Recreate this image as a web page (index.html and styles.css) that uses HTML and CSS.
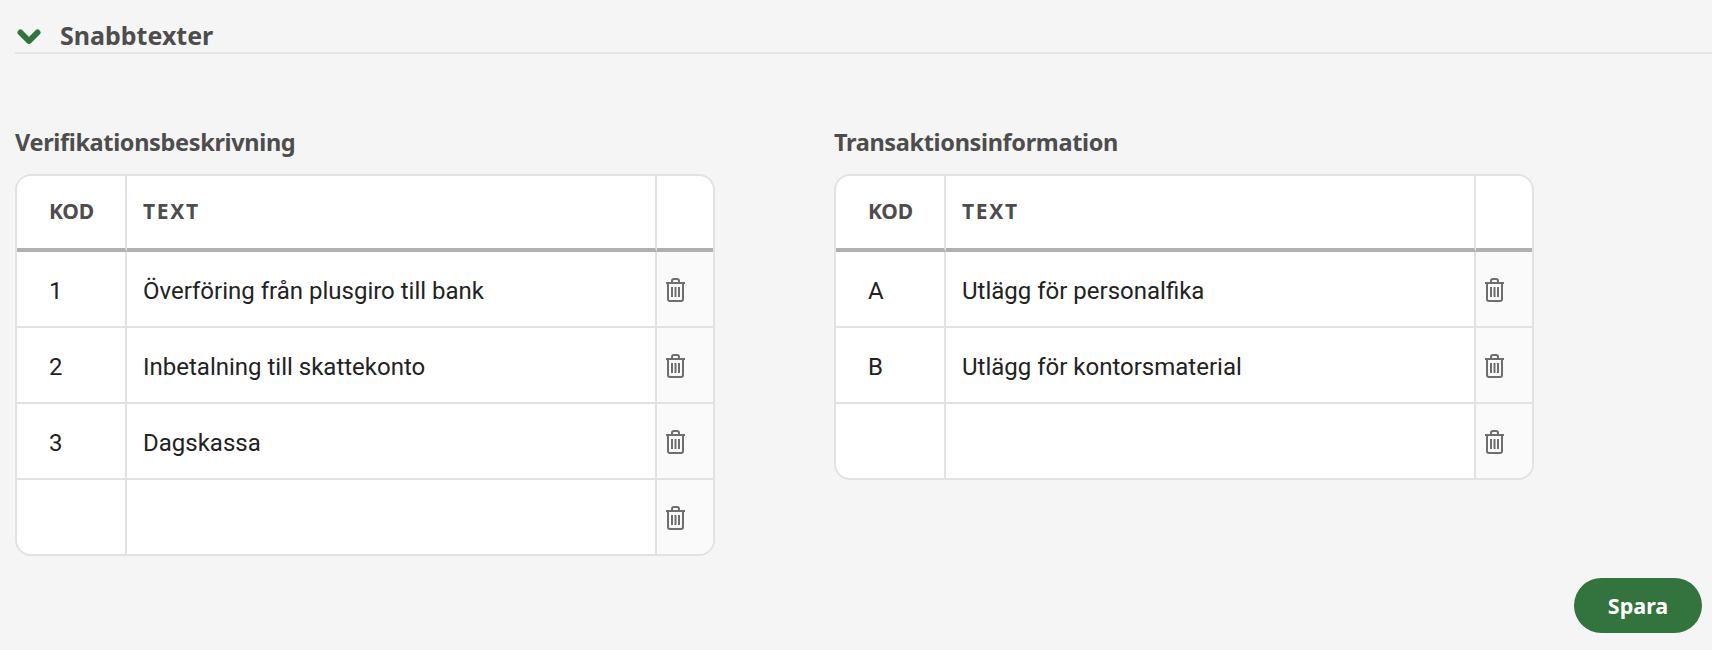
FILE: index.html
```html
<!DOCTYPE html>
<html lang="sv">
<head>
<meta charset="utf-8">
<title>Snabbtexter</title>
<link rel="stylesheet" href="styles.css">
</head>
<body>
<svg class="defs" width="0" height="0" aria-hidden="true">
  <symbol id="trash" viewBox="0 0 21 24">
    <path d="M1 5h19M3 5v16a2 2 0 0 0 2 2h11a2 2 0 0 0 2-2V5M7 5V3a2 2 0 0 1 2-2h3a2 2 0 0 1 2 2v2" fill="none" stroke="currentColor" stroke-width="2"/>
    <path d="M7 9v10M10.500 9v10M14 9v10" fill="none" stroke="currentColor" stroke-width="2"/>
  </symbol>
</svg>
<section class="section">
  <header class="section-head">
    <svg class="chevron" viewBox="0 0 24 16" aria-hidden="true"><path d="M3.500 3.500 12 12l8.500-8.500" fill="none" stroke="#33733d" stroke-width="6" stroke-linejoin="round" stroke-linecap="round"/></svg>
    <h2>Snabbtexter</h2>
  </header>
  <div class="panels">
    <div class="panel">
      <h3>Verifikationsbeskrivning</h3>
      <table>
        <thead><tr><th class="kod">KOD</th><th class="txt">TEXT</th><th class="act"></th></tr></thead>
        <tbody>
          <tr><td class="kod">1</td><td>Överföring från plusgiro till bank</td><td class="act"><svg class="trash"><use href="#trash"/></svg></td></tr>
          <tr><td class="kod">2</td><td>Inbetalning till skattekonto</td><td class="act"><svg class="trash"><use href="#trash"/></svg></td></tr>
          <tr><td class="kod">3</td><td>Dagskassa</td><td class="act"><svg class="trash"><use href="#trash"/></svg></td></tr>
          <tr><td class="kod"></td><td></td><td class="act"><svg class="trash"><use href="#trash"/></svg></td></tr>
        </tbody>
      </table>
    </div>
    <div class="panel">
      <h3>Transaktionsinformation</h3>
      <table>
        <thead><tr><th class="kod">KOD</th><th class="txt">TEXT</th><th class="act"></th></tr></thead>
        <tbody>
          <tr><td class="kod">A</td><td>Utlägg för personalfika</td><td class="act"><svg class="trash"><use href="#trash"/></svg></td></tr>
          <tr><td class="kod">B</td><td>Utlägg för kontorsmaterial</td><td class="act"><svg class="trash"><use href="#trash"/></svg></td></tr>
          <tr><td class="kod"></td><td></td><td class="act"><svg class="trash"><use href="#trash"/></svg></td></tr>
        </tbody>
      </table>
    </div>
  </div>
  <div class="actions"><button type="button">Spara</button></div>
</section>
</body>
</html>
```
FILE: styles.css
```css
* { box-sizing: border-box; }
html, body { margin: 0; height: 650px; overflow: hidden; }
body { background: #f5f5f5; color: #4d4d4d; font-family: Roboto, "Liberation Sans", sans-serif; }
.defs { position: absolute; }
.section { padding: 0 10px 0 15px; }
.section-head {
  display: flex; align-items: center; gap: 19px;
  height: 54px; padding: 18px 0 0 2px; margin-right: -10px;
  border-bottom: 2px solid #e4e4e4;
}
.chevron { width: 24px; height: 16px; flex: none; margin-top: 3px; }
h2 { margin: 0; font: 700 25px/30px "Noto Sans", sans-serif; color: #4d4d4d; }
.panels { display: flex; gap: 119px; padding-top: 73px; }
.panel { width: 700px; }
h3 { margin: 0 0 16px; font: 700 23.500px/31px "Noto Sans", sans-serif; color: #4d4d4d; letter-spacing: -0.35px; }
table {
  width: 700px; table-layout: fixed; border-collapse: separate; border-spacing: 0;
  background: #fff; border: 2px solid #e2e2e2; border-radius: 16px; overflow: hidden;
}
th, td { padding: 0 0 0 16px; text-align: left; border-right: 2px solid #e2e2e2; }
th { height: 76px; padding-bottom: 3px; font: 700 21px "Noto Sans", sans-serif; color: #4d4d4d; border-bottom: 4px solid #b0b0b0; letter-spacing: -0.2px; }
th.txt { letter-spacing: 1.700px; }
td { height: 76px; padding-top: 3px; font-size: 24px; color: #222; border-bottom: 2px solid #e2e2e2; }
tbody tr:last-child td { border-bottom: 0; height: 74px; }
th.kod, td.kod { width: 110px; padding-left: 32px; }
th.act, td.act { width: 56px; padding: 0 0 0 8px; border-right: 0; }
td.act { background: #fafafa; color: #6e6e6e; }
.trash { display: block; width: 21px; height: 24px; margin-top: 2px; }
.actions { display: flex; justify-content: flex-end; margin-top: 22px; }
button {
  width: 128px; height: 55px; border: 0; border-radius: 28px;
  background: #33733d; color: #fff; font: 700 21.500px "Noto Sans", sans-serif;
}
```
